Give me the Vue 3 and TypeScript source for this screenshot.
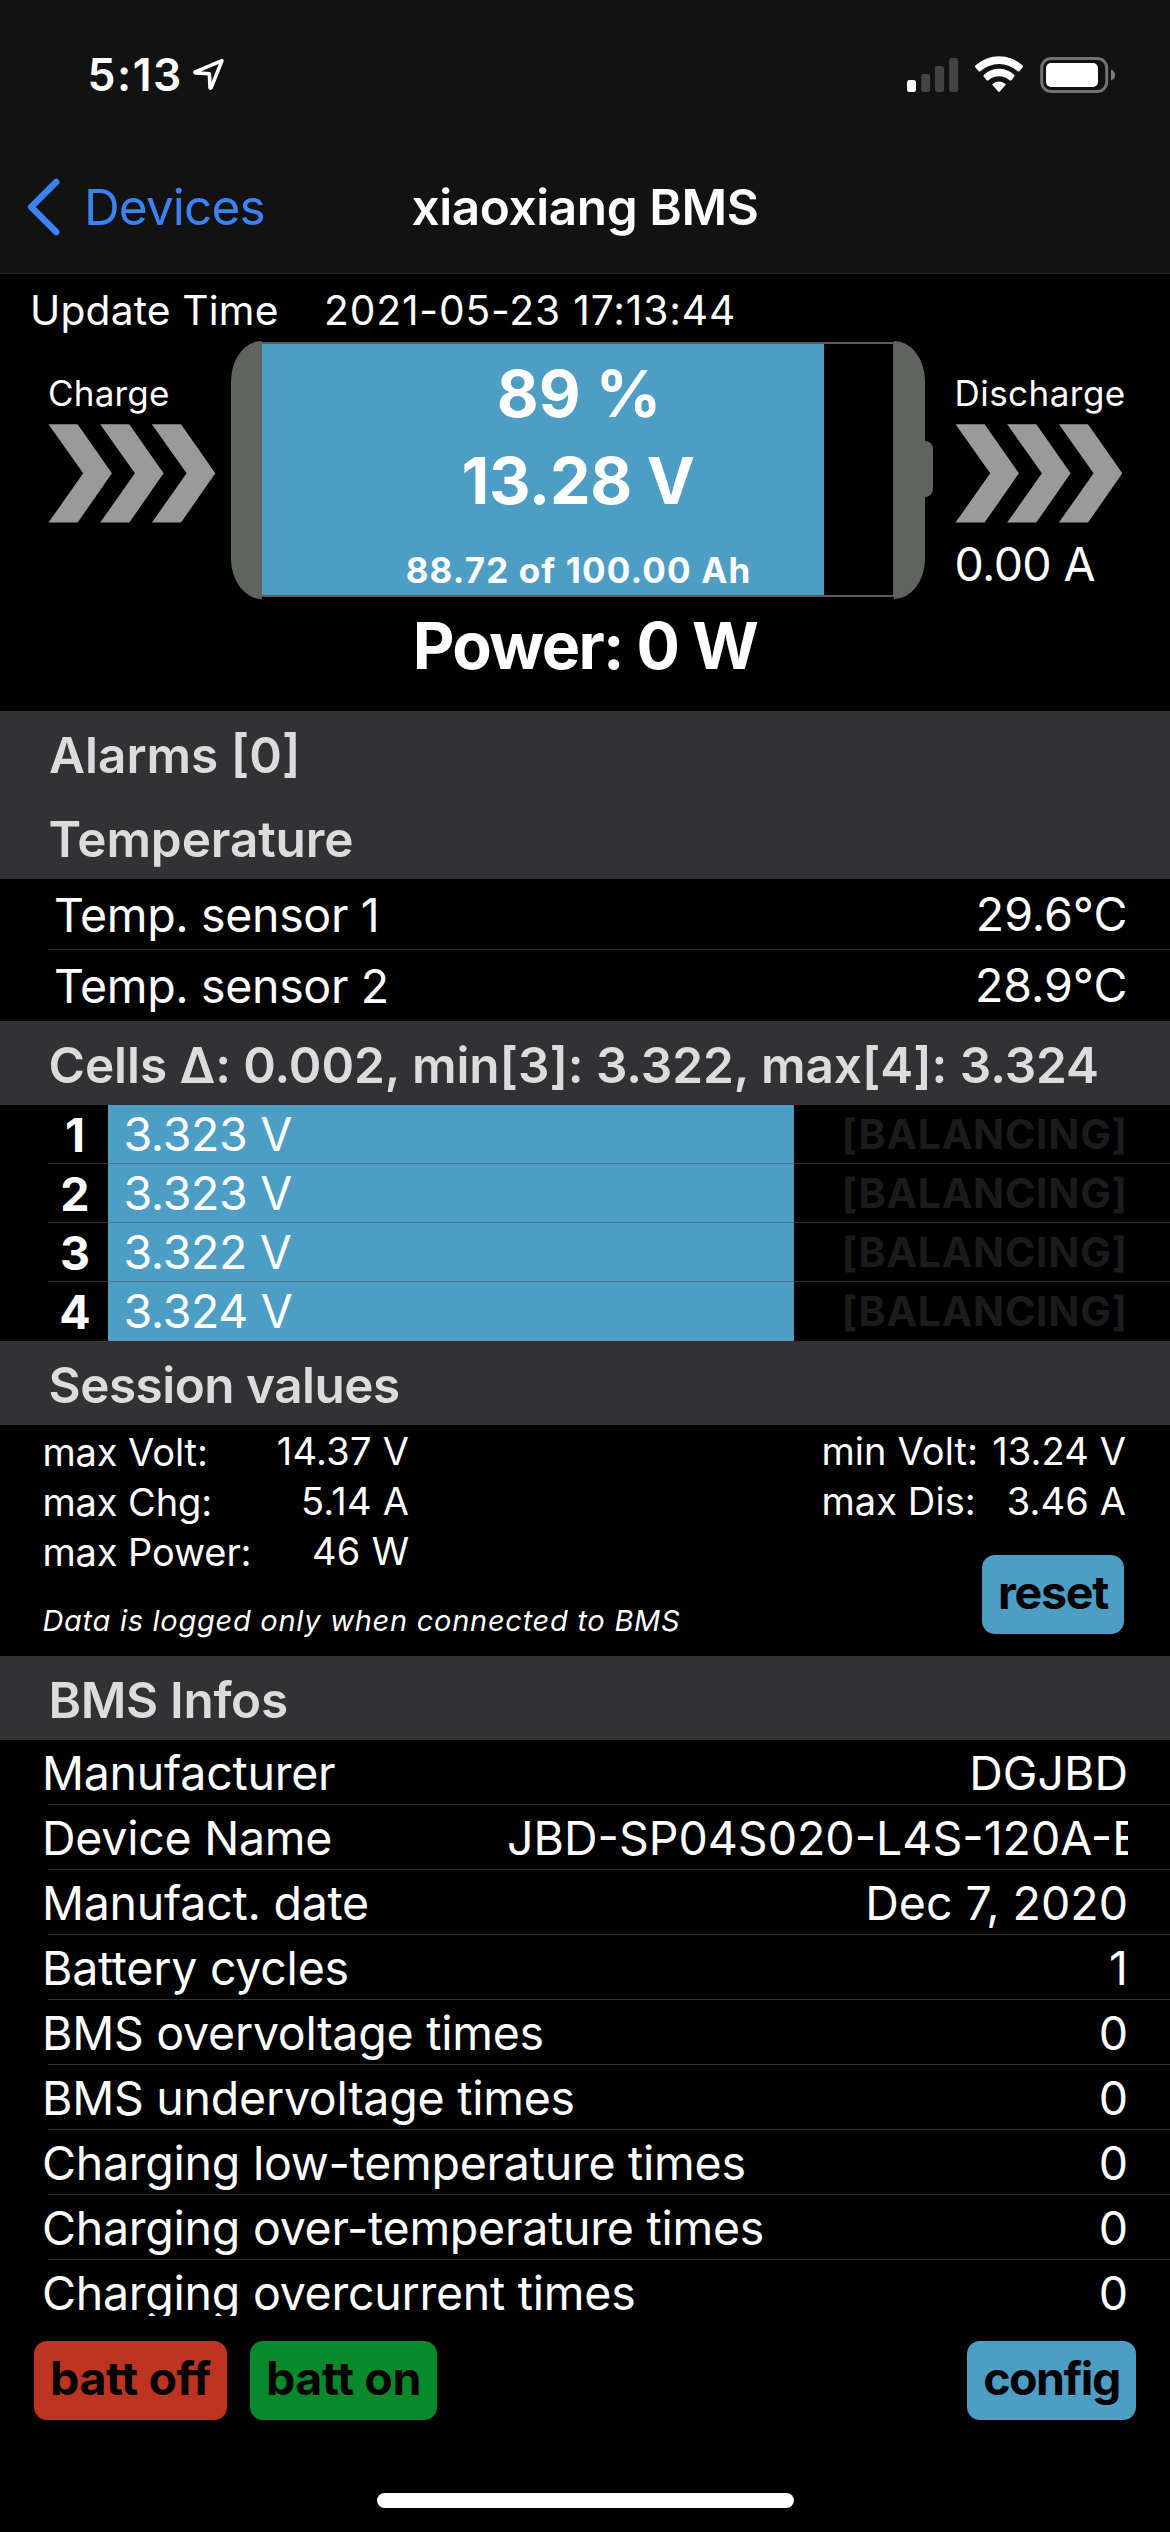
<script setup lang="ts">
interface Cell {
  id: number
  volts: string
}

interface InfoRow {
  label: string
  value: string
}

const stateOfCharge = 89

const sensors: InfoRow[] = [
  { label: 'Temp. sensor 1', value: '29.6°C' },
  { label: 'Temp. sensor 2', value: '28.9°C' },
]

const cells: Cell[] = [
  { id: 1, volts: '3.323 V' },
  { id: 2, volts: '3.323 V' },
  { id: 3, volts: '3.322 V' },
  { id: 4, volts: '3.324 V' },
]

const maxValues: InfoRow[] = [
  { label: 'max Volt:', value: '14.37 V' },
  { label: 'max Chg:', value: '5.14 A' },
  { label: 'max Power:', value: '46 W' },
]

const minValues: InfoRow[] = [
  { label: 'min Volt:', value: '13.24 V' },
  { label: 'max Dis:', value: '3.46 A' },
]

const infos: InfoRow[] = [
  { label: 'Manufacturer', value: 'DGJBD' },
  { label: 'Device Name', value: 'JBD-SP04S020-L4S-120A-B' },
  { label: 'Manufact. date', value: 'Dec 7, 2020' },
  { label: 'Battery cycles', value: '1' },
  { label: 'BMS overvoltage times', value: '0' },
  { label: 'BMS undervoltage times', value: '0' },
  { label: 'Charging low-temperature times', value: '0' },
  { label: 'Charging over-temperature times', value: '0' },
  { label: 'Charging overcurrent times', value: '0' },
]

// Three identical chevrons, spaced evenly along x.
const arrowOffsets = [0, 51.7, 103.4]
const arrowPath = 'M0.5 0.3H29.6L63.9 49.3L29.6 98.6H0.5L35.2 49.3Z'
</script>

<template>
  <div class="screen">
    <header class="top">
      <div class="status">
        <span class="time">5:13</span>
        <svg class="locate" width="36" height="36" viewBox="0 0 36 36">
          <path
            d="M31 4.6L4.3 15.8Q3.4 16.6 4.6 16.9L18.4 17.7L19 31.4Q19.4 32.8 20.2 31.6Z"
            fill="none" stroke="#fff" stroke-width="3.6" stroke-linejoin="round"
          />
        </svg>
        <svg class="radios" width="212" height="40" viewBox="0 0 212 40">
          <rect x="2" y="26" width="9" height="12" rx="2.5" fill="#fff" />
          <rect x="16.2" y="20" width="9" height="18" rx="2.5" fill="#434343" />
          <rect x="30" y="12" width="9" height="26" rx="2.5" fill="#434343" />
          <rect x="44.2" y="4" width="9" height="34" rx="2.5" fill="#434343" />
          <path d="M69.9 12.8Q70 11.8 71 11.1A34.5 34.5 0 0 1 117 11.1Q118 11.8 118.1 12.8L114.3 17.2Q113.6 17.9 112.7 17.2A28 28 0 0 0 75.3 17.2Q74.4 17.9 73.7 17.2Z" fill="#fff" />
          <path d="M78.3 22Q78.5 21.2 79.2 20.5A22 22 0 0 1 108.8 20.5Q109.5 21.2 109.7 22L106.3 26.3Q105.4 27.1 104.5 26.3A15.5 15.5 0 0 0 83.5 26.3Q82.6 27.1 81.7 26.3Z" fill="#fff" />
          <path d="M87.2 30.7Q87.5 30 88.2 29.4A9.5 9.5 0 0 1 99.8 29.4Q100.5 30 100.8 30.7L94.8 37.6Q94 38.3 93.2 37.6Z" fill="#fff" />
          <rect x="136.7" y="4.5" width="65" height="33" rx="9.5" fill="none" stroke="#727272" stroke-width="3" />
          <rect x="141" y="9" width="52" height="24" rx="5" fill="#fff" />
          <path d="M206 15.4Q210.2 17.4 210.2 21Q210.2 24.6 206 26.6Z" fill="#7d7d7d" />
        </svg>
      </div>
      <nav class="nav">
        <a class="back">
          <svg width="40" height="60" viewBox="0 0 40 60">
            <path d="M32.2 5L7.2 30L32.2 55" fill="none" stroke="#3b82f7" stroke-width="6.6" stroke-linecap="round" stroke-linejoin="round" />
          </svg>
          <span>Devices</span>
        </a>
        <h1>xiaoxiang BMS</h1>
      </nav>
    </header>

    <section class="hero">
      <div class="update">
        <span class="update-label">Update Time</span>
        <span class="update-value">2021-05-23 17:13:44</span>
      </div>
      <div class="gauge">
        <div class="flow charge">
          <span class="flow-label">Charge</span>
          <svg width="168" height="99" viewBox="0 0 168 99" fill="#9a9a9a">
            <path v-for="x in arrowOffsets" :key="x" :d="arrowPath" :transform="`translate(${x} 0)`" />
          </svg>
        </div>
        <div class="battery">
          <div class="cap cap-left"></div>
          <div class="body">
            <div class="fill" :style="{ width: stateOfCharge + '%' }"></div>
            <div class="readout">
              <span class="big percent">89 %</span>
              <span class="big volts">13.28 V</span>
              <span class="small">88.72 of 100.00 Ah</span>
            </div>
          </div>
          <div class="cap cap-right"></div>
          <div class="nub"></div>
        </div>
        <div class="flow discharge">
          <span class="flow-label wide">Discharge</span>
          <svg width="168" height="99" viewBox="0 0 168 99" fill="#9a9a9a">
            <path v-for="x in arrowOffsets" :key="x" :d="arrowPath" :transform="`translate(${x} 0)`" />
          </svg>
          <span class="amps">0.00 A</span>
        </div>
      </div>
      <div class="power">Power: 0 W</div>
    </section>

    <main class="list">
      <h2 class="alarms">Alarms [0]</h2>
      <h2>Temperature</h2>
      <div v-for="s in sensors" :key="s.label" class="row sensor">
        <span class="sensor-label">{{ s.label }}</span>
        <span class="sensor-value">{{ s.value }}</span>
      </div>

      <h2 class="cells-title">Cells Δ: 0.002, min[3]: 3.322, max[4]: 3.324</h2>
      <div v-for="c in cells" :key="c.id" class="row cell">
        <span class="cell-id">{{ c.id }}</span>
        <span class="cell-bar">{{ c.volts }}</span>
        <span class="balancing">[BALANCING]</span>
      </div>

      <h2 class="session-title">Session values</h2>
      <div class="session">
        <div class="session-left">
          <div v-for="m in maxValues" :key="m.label" class="stat">
            <span class="stat-label">{{ m.label }}</span>
            <span class="stat-value">{{ m.value }}</span>
          </div>
          <p class="note">Data is logged only when connected to BMS</p>
        </div>
        <div class="session-right">
          <div v-for="m in minValues" :key="m.label" class="stat even">
            <span>{{ m.label }}</span>
            <span>{{ m.value }}</span>
          </div>
          <button class="btn blue reset">reset</button>
        </div>
      </div>

      <h2 class="infos-title">BMS Infos</h2>
      <div v-for="r in infos" :key="r.label" class="row info">
        <span class="info-label">{{ r.label }}</span>
        <span class="info-value">{{ r.value }}</span>
      </div>
    </main>

    <footer class="actions">
      <button class="btn red">batt off</button>
      <button class="btn green">batt on</button>
      <button class="btn blue config">config</button>
    </footer>
    <div class="home"></div>
  </div>
</template>

<style>
html,
body {
  background: #000;
}
</style>

<style scoped>
.screen {
  width: 1170px;
  height: 2532px;
  display: flex;
  flex-direction: column;
  overflow: hidden;
  background: #000;
  color: #fff;
  font-family: Inter, 'Liberation Sans', sans-serif;
  font-size: 46.5px;
  white-space: nowrap;
}

.screen *,
.screen *::after {
  box-sizing: border-box;
}

/* Status bar and navigation */
.top {
  flex: none;
  height: 274px;
  background: #121212;
  border-bottom: 1px solid #272728;
}

.status {
  height: 141px;
  padding: 9px 53px 0 87.5px;
  display: flex;
  align-items: center;
}

.time {
  font-size: 44.5px;
  font-weight: 600;
  letter-spacing: 1.5px;
}

.locate {
  margin: -3px 0 0 8px;
}

.radios {
  margin-left: auto;
  margin-top: -2px;
}

.nav {
  height: 132px;
  display: grid;
  grid-template-columns: 1fr auto 1fr;
  align-items: center;
  font-size: 49.5px;
}

.back {
  display: flex;
  align-items: center;
  gap: 20px;
  padding-left: 24px;
  color: #3b82f7;
  letter-spacing: -0.86px;
}

h1 {
  margin: 0;
  font-size: 49.5px;
  font-weight: 600;
  letter-spacing: -0.4px;
}

/* Pack overview */
.hero {
  flex: none;
  height: 437px;
}

.update {
  height: 64px;
  padding: 8px 0 0 30px;
  display: flex;
  align-items: center;
  font-size: 40.7px;
}

.update-label {
  width: 294px;
  letter-spacing: 0.19px;
}

.update-value {
  letter-spacing: 0.87px;
}

.gauge {
  margin-top: 2px;
  height: 259px;
  display: flex;
}

.flow {
  display: flex;
  flex-direction: column;
  align-items: flex-start;
  padding-top: 33px;
}

.flow svg {
  display: block;
  margin-top: 11px;
}

.charge {
  width: 231px;
  padding-left: 48px;
}

.discharge {
  padding-left: 21.5px;
}

.flow-label {
  font-size: 35px;
  line-height: 40px;
  letter-spacing: 0.2px;
}

.wide {
  letter-spacing: 0.47px;
}

.amps {
  margin-top: 13px;
  line-height: 56px;
  letter-spacing: -0.62px;
}

.battery {
  width: 702px;
  display: flex;
  align-items: center;
}

.cap {
  width: 31px;
  height: 258px;
  background: #616361;
}

.cap-left {
  border-radius: 31px 0 0 31px / 40px 0 0 40px;
}

.cap-right {
  border-radius: 0 31px 31px 0 / 0 40px 40px 0;
}

.body {
  width: 632px;
  height: 255px;
  display: grid;
}

.fill,
.readout {
  grid-area: 1 / 1;
}

.fill {
  background: #4e9dc4;
}

.readout {
  display: flex;
  flex-direction: column;
  align-items: center;
  padding-top: 7px;
  border: solid #5b5c5b;
  border-width: 2px 1px 2px 0;
  font-weight: 700;
}

.big {
  font-size: 64.5px;
  line-height: 87px;
}

.percent {
  padding-left: 3px;
}

.volts {
  padding-left: 1px;
  letter-spacing: -0.4px;
}

.small {
  margin-top: 23px;
  padding-left: 2px;
  font-size: 35px;
  line-height: 45px;
  letter-spacing: 1.13px;
}

.nub {
  width: 8px;
  height: 56px;
  margin-top: -1px;
  border-radius: 0 8px 8px 0;
  background: #616361;
}

.power {
  height: 95px;
  line-height: 95px;
  text-align: center;
  font-size: 64.5px;
  font-weight: 700;
  letter-spacing: -1.65px;
}

/* Scrolling list */
.list {
  flex: none;
  height: 1605px;
  overflow: hidden;
}

h2 {
  margin: 0;
  height: 84px;
  padding: 4px 0 0 48.5px;
  background: #323234;
  color: #dcdcdc;
  font-size: 49.5px;
  line-height: 80px;
  font-weight: 600;
  letter-spacing: -0.1px;
}

.alarms {
  padding-left: 49px;
  letter-spacing: 0;
}

.cells-title {
  letter-spacing: -0.06px;
}

.session-title {
  letter-spacing: -0.52px;
}

.infos-title {
  letter-spacing: -0.34px;
}

.row {
  position: relative;
  display: flex;
  align-items: center;
}

.row::after {
  content: '';
  position: absolute;
  left: 48px;
  right: 0;
  bottom: 0;
  height: 1px;
  background: rgba(84, 84, 88, 0.6);
}

.row:has(+ h2)::after {
  display: none;
}

.sensor {
  height: 71px;
  padding: 0 42.5px 0 54px;
  justify-content: space-between;
}

.sensor-label {
  padding-top: 1px;
  letter-spacing: -0.35px;
}

.sensor-value {
  padding-bottom: 1px;
}

.cell {
  height: 59px;
}

.cell-id {
  width: 108px;
  padding: 1px 0 0 42px;
  text-align: center;
  font-weight: 700;
}

.cell-bar {
  width: 686px;
  padding: 0 0 1px 15.5px;
  background: #4e9dc4;
  line-height: 58px;
  letter-spacing: -0.33px;
}

.balancing {
  flex: 1;
  padding: 0 42px 2px 0;
  text-align: right;
  color: #1b1b1b;
  font-size: 41px;
  font-weight: 700;
  letter-spacing: 0.73px;
}

.session {
  height: 231px;
  padding: 2px 44px 0 42.4px;
  display: flex;
  justify-content: space-between;
  font-size: 38px;
}

.stat {
  height: 50px;
  line-height: 50px;
  display: flex;
  justify-content: space-between;
  letter-spacing: 0.1px;
}

.session-left .stat {
  width: 367px;
}

.stat-label {
  letter-spacing: -0.1px;
}

.stat-value,
.even {
  position: relative;
  top: -1px;
}

.stat-value {
  letter-spacing: 0.3px;
}

.session-right {
  width: 304.6px;
  display: flex;
  flex-direction: column;
}

.note {
  margin: 24px 0 0;
  font-size: 29px;
  line-height: 40px;
  font-style: italic;
  letter-spacing: 0.73px;
}

.info {
  height: 65px;
  padding: 1px 42px 0 42px;
  justify-content: space-between;
}

.info-label {
  letter-spacing: -0.25px;
}

.info-value {
  max-width: 621px;
  overflow: hidden;
}

/* Buttons */
.btn {
  height: 79px;
  padding: 0 0 5px;
  border: 0;
  border-radius: 13px;
  color: #000;
  font: 700 46.5px Inter, 'Liberation Sans', sans-serif;
  letter-spacing: -0.35px;
}

.blue {
  background: #4e9dc4;
}

.red {
  width: 193px;
  background: #bd3421;
}

.green {
  width: 187px;
  background: #08892c;
}

.reset {
  width: 142px;
  margin: 28px 2px 0 auto;
  letter-spacing: -1.24px;
}

.config {
  width: 169px;
  margin-left: auto;
  letter-spacing: -1.5px;
}

.actions {
  flex: none;
  height: 177px;
  padding: 25px 34px 0;
  display: flex;
  align-items: flex-start;
  gap: 23px;
}

.home {
  flex: none;
  width: 417px;
  height: 15px;
  margin: 0 auto;
  border-radius: 8px;
  background: #fff;
}
</style>
